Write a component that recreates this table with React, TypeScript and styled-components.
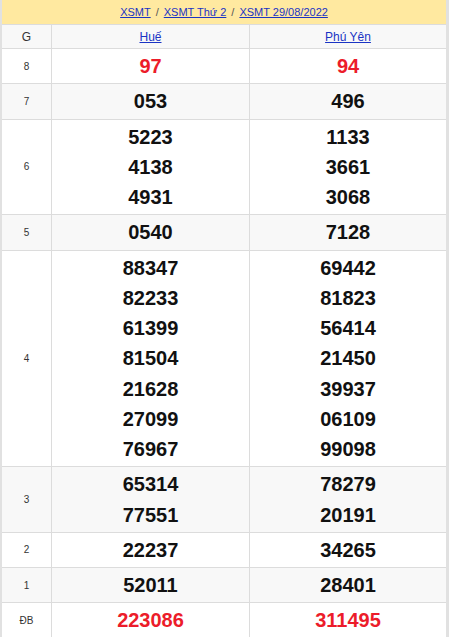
import React from "react";
import styled, { createGlobalStyle } from "styled-components";

const Global = createGlobalStyle`
  html, body { margin: 0; padding: 0; background: #fff; }
  body { font-family: "Liberation Sans", Arial, sans-serif; }
`;

const Page = styled.div`
  width: 444px;
  border-left: 2px solid #e1e1e1;
  border-right: 3px solid #e1e1e1;
  background: #fff;
`;

const Crumbs = styled.div`
  height: 24px;
  background: #ffe9a0;
  border-bottom: 1px solid #dcdcdc;
  display: flex;
  align-items: center;
  justify-content: center;
  gap: 5px;
  font-size: 11px;
  color: #555;
`;

const Link = styled.a`
  color: #1a34c4;
  text-decoration: underline;
`;

const Row = styled.div<{ $alt?: boolean }>`
  display: grid;
  grid-template-columns: 49px 198px 197px;
  border-bottom: 1px solid #dcdcdc;
  background: ${(p) => (p.$alt ? "#f8f8f8" : "#fff")};
`;

const HeadRow = styled(Row)`
  height: 23px;
  background: #f8f8f8;
`;

const Label = styled.div`
  display: flex;
  align-items: center;
  justify-content: center;
  font-size: 10px;
  color: #333;
`;

const HeadLabel = styled(Label)`
  font-size: 12px;
`;

const Cell = styled.div`
  border-left: 1px solid #dcdcdc;
  display: flex;
  flex-direction: column;
  align-items: center;
  justify-content: center;
  padding: 2px 0;
`;

const HeadCell = styled(Cell)`
  padding: 0;
  font-size: 12px;
`;

const Num = styled.div<{ $red?: boolean }>`
  font-size: 20px;
  font-weight: bold;
  line-height: 30.25px;
  color: ${(p) => (p.$red ? "#ec1c2a" : "#111")};
`;

type Prize = { g: string; a: string[]; b: string[]; red?: boolean };

const prizes: Prize[] = [
  { g: "8", a: ["97"], b: ["94"], red: true },
  { g: "7", a: ["053"], b: ["496"] },
  { g: "6", a: ["5223", "4138", "4931"], b: ["1133", "3661", "3068"] },
  { g: "5", a: ["0540"], b: ["7128"] },
  {
    g: "4",
    a: ["88347", "82233", "61399", "81504", "21628", "27099", "76967"],
    b: ["69442", "81823", "56414", "21450", "39937", "06109", "99098"],
  },
  { g: "3", a: ["65314", "77551"], b: ["78279", "20191"] },
  { g: "2", a: ["22237"], b: ["34265"] },
  { g: "1", a: ["52011"], b: ["28401"] },
  { g: "ĐB", a: ["223086"], b: ["311495"], red: true },
];

export default function App() {
  return (
    <>
      <Global />
      <Page>
        <Crumbs>
          <Link href="#">XSMT</Link>
          <span>/</span>
          <Link href="#">XSMT Thứ 2</Link>
          <span>/</span>
          <Link href="#">XSMT 29/08/2022</Link>
        </Crumbs>
        <HeadRow>
          <HeadLabel>G</HeadLabel>
          <HeadCell>
            <Link href="#">Huế</Link>
          </HeadCell>
          <HeadCell>
            <Link href="#">Phú Yên</Link>
          </HeadCell>
        </HeadRow>
        {prizes.map((p, i) => (
          <Row key={p.g} $alt={i % 2 === 1}>
            <Label>{p.g}</Label>
            <Cell>
              {p.a.map((n) => (
                <Num key={n} $red={p.red}>
                  {n}
                </Num>
              ))}
            </Cell>
            <Cell>
              {p.b.map((n) => (
                <Num key={n} $red={p.red}>
                  {n}
                </Num>
              ))}
            </Cell>
          </Row>
        ))}
      </Page>
    </>
  );
}
